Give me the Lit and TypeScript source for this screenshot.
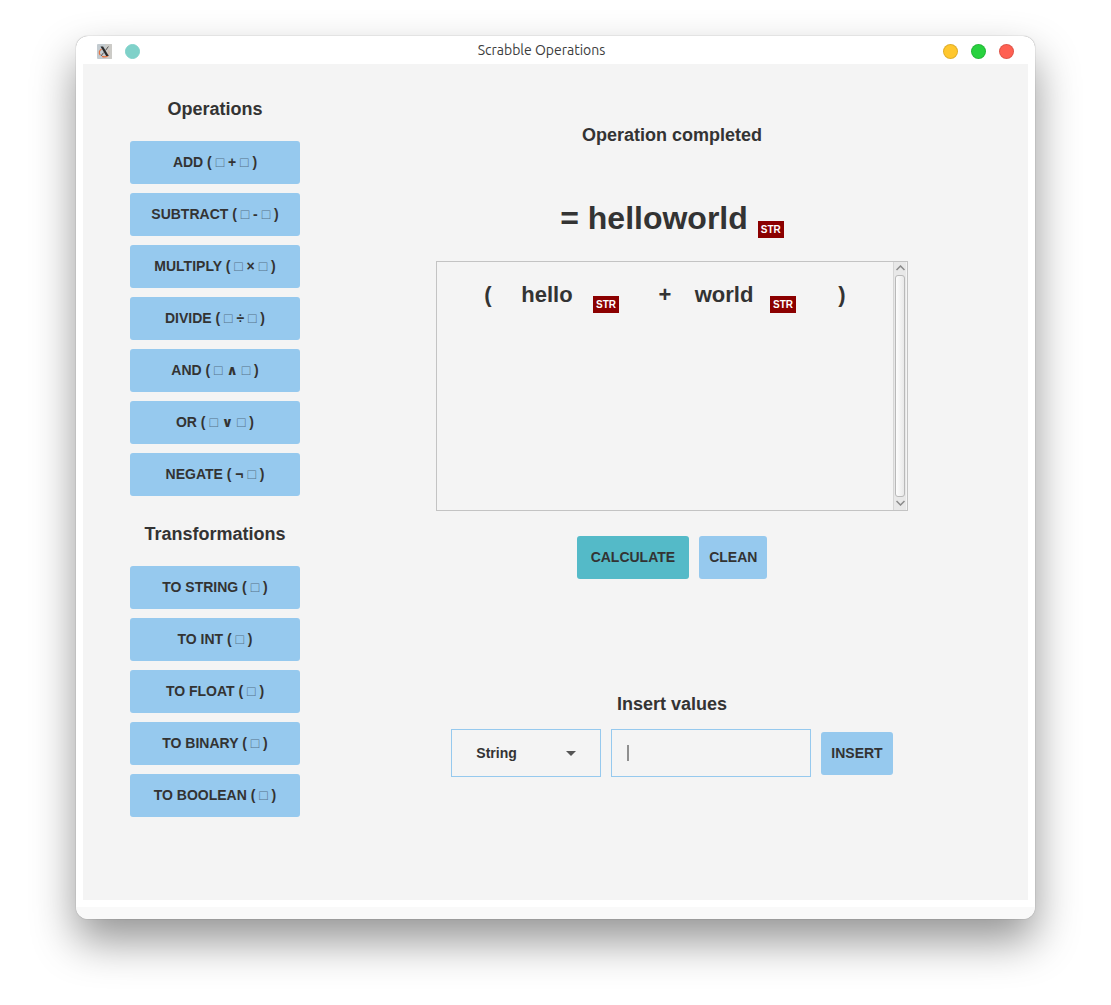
import { LitElement, html, css, svg } from "lit";
import { customElement, property, state } from "lit/decorators.js";

interface Operand {
  text: string;
  type: string;
}

const OPERATIONS = [
  "ADD ( □ + □ )",
  "SUBTRACT ( □ - □ )",
  "MULTIPLY ( □ × □ )",
  "DIVIDE ( □ ÷ □ )",
  "AND ( □ ∧ □ )",
  "OR ( □ ∨ □ )",
  "NEGATE ( ¬ □ )",
];

const TRANSFORMATIONS = [
  "TO STRING ( □ )",
  "TO INT ( □ )",
  "TO FLOAT ( □ )",
  "TO BINARY ( □ )",
  "TO BOOLEAN ( □ )",
];

const TYPES = ["String", "Int", "Float", "Binary", "Boolean"];

@customElement("type-badge")
export class TypeBadge extends LitElement {
  @property() label = "";

  static styles = css`
    :host {
      display: block;
      padding: 0 3px;
      background: #8b0000;
      color: #fff;
      font: bold 10px/17px "Liberation Sans", Arial, sans-serif;
    }
  `;

  render() {
    return html`${this.label}`;
  }
}

@customElement("button-group")
export class ButtonGroup extends LitElement {
  @property() heading = "";
  @property({ attribute: false }) items: string[] = [];

  static styles = css`
    :host {
      display: block;
    }
    .heading {
      margin: 0 0 20px;
      font-size: 18px;
      line-height: 24px;
      text-align: center;
    }
    .list {
      display: flex;
      flex-direction: column;
      gap: 9px;
    }
    .action {
      height: 43px;
      padding: 0 10px 1px;
      border: 0;
      border-radius: 3px;
      background: #96c9ee;
      color: #333;
      font: bold 14px/20px "Liberation Sans", Arial, "DejaVu Sans", sans-serif;
    }
    .slot {
      color: #56728a;
      font-weight: normal;
    }
  `;

  private label(text: string) {
    return text
      .split(/(□)/)
      .map((part) => (part === "□" ? html`<span class="slot">□</span>` : part));
  }

  render() {
    return html`
      <h2 class="heading">${this.heading}</h2>
      <div class="list">
        ${this.items.map(
          (item) => html`<button class="action" type="button">${this.label(item)}</button>`
        )}
      </div>
    `;
  }
}

@customElement("title-bar")
export class TitleBar extends LitElement {
  @property() caption = "";

  static styles = css`
    :host {
      display: flex;
      align-items: center;
      gap: 13px;
      height: 25px;
      padding: 3px 21px 0;
    }
    .logo {
      display: block;
      width: 15px;
      height: 15px;
    }
    .caption {
      flex: 1;
      margin: 0;
      padding-bottom: 3px;
      color: #3c3c3c;
      font: normal 14px/20px Ubuntu, "Noto Sans", "Open Sans", sans-serif;
      text-align: center;
    }
    .dot {
      box-sizing: border-box;
      width: 15px;
      height: 15px;
      padding: 0;
      border: 1px solid rgba(0, 0, 0, 0.12);
      border-radius: 50%;
    }
    .pin {
      border-color: #7fd1c9;
      background: #7fd1c9;
    }
    .minimize {
      background: #ffc72e;
    }
    .maximize {
      background: #28d23f;
    }
    .close {
      background: #ff6052;
    }
  `;

  render() {
    return html`
      <svg class="logo" viewBox="0 0 15 15" aria-hidden="true">
        <rect width="15" height="15" rx="1" fill="#c3cbd0" />
        <path d="M8 0h6a1 1 0 0 1 1 1v13a1 1 0 0 1-1 1H9z" fill="#cccbc7" />
        <path
          d="M4.600 5.200C2 6.200 1.600 9.400 3.400 11M5 12.400c2 .7 4.400.5 6-.7"
          fill="none"
          stroke="#e8703c"
          stroke-width="1.200"
        />
        <path
          d="M11.500 6.500c.8 1.600.7 3.200-.2 4.500"
          fill="none"
          stroke="#d9b9a4"
          stroke-width="1"
        />
        <path d="M3.500 2.500h2.600L11.800 12H9.200z" fill="#2a2a2a" />
        <path d="M11.400 2.500 8.400 6.600M6.600 8.600 4 12" stroke="#555" stroke-width="1" />
      </svg>
      <button class="dot pin" type="button" aria-label="Pin"></button>
      <h1 class="caption">${this.caption}</h1>
      <button class="dot minimize" type="button" aria-label="Minimize"></button>
      <button class="dot maximize" type="button" aria-label="Maximize"></button>
      <button class="dot close" type="button" aria-label="Close"></button>
    `;
  }
}

@customElement("expression-panel")
export class ExpressionPanel extends LitElement {
  @property({ attribute: false }) operands: Operand[] = [];
  @property() operator = "+";

  static styles = css`
    :host {
      display: flex;
      box-sizing: border-box;
      min-height: 250px;
      border: 1px solid #c3c3c3;
    }
    .terms {
      display: flex;
      flex: 1;
      align-items: flex-start;
      justify-content: center;
      padding-top: 18px;
      font-size: 22px;
      font-weight: bold;
      line-height: 30px;
    }
    .symbol {
      width: 58px;
      text-align: center;
    }
    .operand {
      display: flex;
      gap: 16px;
      padding-right: 17px;
    }
    .word {
      min-width: 60px;
      text-align: center;
    }
    .badge {
      margin-top: 16px;
    }
    .scrollbar {
      display: flex;
      flex-direction: column;
      box-sizing: border-box;
      width: 14px;
      padding: 0 1px;
      border: solid #d6d6d6;
      border-width: 0 0 0 1px;
      border-right: 1px solid #f4f4f4;
      background: #e8e8e8;
    }
    .arrow {
      height: 13px;
      padding: 0 0 1px;
      border: 0;
      background: none;
    }
    .glyph {
      display: block;
      margin: 0 auto;
    }
    .thumb {
      flex: 1;
      border: 1px solid #b9b9b9;
      border-radius: 3px;
      background: linear-gradient(to right, #fdfdfd, #e9e9e9);
    }
  `;

  private arrow(label: string, d: string) {
    return html`
      <button class="arrow" type="button" aria-label=${label}>
        <svg class="glyph" width="9" height="6" viewBox="0 0 9 6">
          ${svg`<path d=${d} fill="none" stroke="#8a8a8a" stroke-width="1.500" />`}
        </svg>
      </button>
    `;
  }

  render() {
    return html`
      <div class="terms">
        <span class="symbol">(</span>
        ${this.operands.map(
          (operand, i) => html`
            ${i > 0 ? html`<span class="symbol">${this.operator}</span>` : null}
            <span class="operand">
              <span class="word">${operand.text}</span>
              <span class="badge"><type-badge label=${operand.type}></type-badge></span>
            </span>
          `
        )}
        <span class="symbol">)</span>
      </div>
      <div class="scrollbar">
        ${this.arrow("Scroll up", "M.5 5 4.500 1 8.500 5")}
        <div class="thumb"></div>
        ${this.arrow("Scroll down", "M.5 1 4.500 5 8.500 1")}
      </div>
    `;
  }
}

@customElement("app-root")
export class AppRoot extends LitElement {
  @state() private value = "";
  @state() private operands: Operand[] = [
    { text: "hello", type: "STR" },
    { text: "world", type: "STR" },
  ];

  static styles = css`
    :host {
      display: block;
      box-sizing: border-box;
      min-height: 100vh;
      padding: 36px 76px 86px;
      background: #fff;
      color: #333;
      font-family: "Liberation Sans", Arial, sans-serif;
    }
    .window {
      display: flex;
      flex-direction: column;
      box-sizing: border-box;
      min-height: calc(100vh - 122px);
      border-radius: 12px;
      background: #fff;
      box-shadow: 0 0 1px rgba(0, 0, 0, 0.5), 0 22px 44px rgba(0, 0, 0, 0.42);
      overflow: hidden;
    }
    .client {
      display: flex;
      flex: 1;
      gap: 16px;
      margin: 0 7px 7px;
      padding-left: 47px;
      background: #f4f4f4;
    }
    .status-strip {
      height: 12px;
      background: #f9f9f9;
    }
    .sidebar {
      display: flex;
      flex-direction: column;
      gap: 26px;
      width: 170px;
      padding: 33px 0;
    }
    .main {
      display: flex;
      flex: 1;
      flex-direction: column;
      align-items: center;
      padding: 59px 0;
    }
    .heading {
      margin: 0;
      font-size: 18px;
      line-height: 24px;
    }
    .result {
      display: flex;
      align-items: flex-end;
      gap: 10px;
      margin-top: 51px;
    }
    .answer {
      font-size: 32px;
      font-weight: bold;
      line-height: 40px;
    }
    .panel {
      width: 472px;
      margin-top: 23px;
    }
    .buttons {
      display: flex;
      gap: 10px;
      margin: 25px 0 113px;
    }
    .button {
      height: 43px;
      padding: 0 10px 1px;
      border: 0;
      border-radius: 3px;
      background: #96c9ee;
      color: #333;
      font: bold 14px/20px "Liberation Sans", Arial, sans-serif;
    }
    .primary {
      padding: 0 14px 1px;
      background: #54bac8;
    }
    .form {
      display: flex;
      align-items: center;
      gap: 10px;
      margin-top: 13px;
    }
    .field {
      position: relative;
    }
    .control {
      display: block;
      box-sizing: border-box;
      height: 48px;
      margin: 0;
      border: 1px solid #96c9ee;
      border-radius: 0;
      outline: 0;
      background: transparent;
      color: #333;
      appearance: none;
      font: bold 14px/20px "Liberation Sans", Arial, sans-serif;
    }
    .select {
      width: 150px;
      padding: 0 24px;
    }
    .input {
      width: 200px;
      padding: 0 15px;
    }
    .chevron {
      position: absolute;
      top: 22px;
      right: 25px;
      pointer-events: none;
    }
    .caret {
      position: absolute;
      top: 16px;
      left: 16px;
      width: 2px;
      height: 16px;
      background: #8f8f8f;
      pointer-events: none;
    }
  `;

  private onInput(event: Event) {
    this.value = (event.target as HTMLInputElement).value;
  }

  render() {
    const answer = this.operands.map((operand) => operand.text).join("");
    return html`
      <div class="window">
        <title-bar caption="Scrabble Operations"></title-bar>
        <div class="client">
          <nav class="sidebar">
            <button-group heading="Operations" .items=${OPERATIONS}></button-group>
            <button-group heading="Transformations" .items=${TRANSFORMATIONS}></button-group>
          </nav>
          <main class="main">
            <h2 class="heading">Operation completed</h2>
            <div class="result">
              <span class="answer">= ${answer}</span>
              <type-badge label="STR"></type-badge>
            </div>
            <expression-panel class="panel" .operands=${this.operands}></expression-panel>
            <div class="buttons">
              <button class="button primary" type="button">CALCULATE</button>
              <button class="button" type="button">CLEAN</button>
            </div>
            <h2 class="heading">Insert values</h2>
            <div class="form">
              <div class="field">
                <select class="control select" aria-label="Value type">
                  ${TYPES.map((type) => html`<option>${type}</option>`)}
                </select>
                <svg class="chevron" width="10" height="5" viewBox="0 0 10 5" aria-hidden="true">
                  <path d="M0 0h10L5 5z" fill="#555" />
                </svg>
              </div>
              <div class="field">
                <input
                  class="control input"
                  type="text"
                  aria-label="Value"
                  .value=${this.value}
                  @input=${this.onInput}
                />
                ${this.value ? null : html`<span class="caret"></span>`}
              </div>
              <button class="button" type="button">INSERT</button>
            </div>
          </main>
        </div>
        <div class="status-strip"></div>
      </div>
    `;
  }
}
